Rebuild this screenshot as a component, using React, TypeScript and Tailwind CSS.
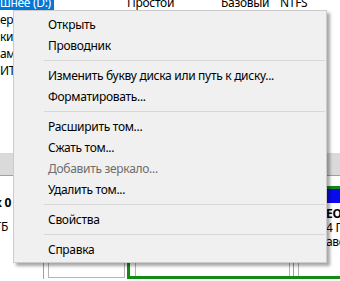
import React from 'react';

type Entry = { label?: string; disabled?: boolean; sep?: boolean };

const menu: Entry[] = [
  { label: 'Открыть' },
  { label: 'Проводник' },
  { sep: true },
  { label: 'Изменить букву диска или путь к диску...' },
  { label: 'Форматировать...' },
  { sep: true },
  { label: 'Расширить том...' },
  { label: 'Сжать том...' },
  { label: 'Добавить зеркало...', disabled: true },
  { label: 'Удалить том...' },
  { sep: true },
  { label: 'Свойства' },
  { sep: true },
  { label: 'Справка' },
];

const listRows = ['ерв', 'ки', 'ам', 'ИТЕ'];

export default function App() {
  return (
    <div className="relative w-[340px] h-[281px] overflow-hidden bg-white text-[12px] tracking-[-0.3px] text-black font-['Segoe_UI','Noto_Sans','Open_Sans',sans-serif]">
      {/* volume list */}
      <div className="h-[159px] -mt-[6px] flex flex-col leading-[17px]">
        <div className="flex h-[17px] shrink-0 whitespace-nowrap">
          <div className="w-[127px]">
            <div className="inline-block h-[15px] pr-[3px] bg-[#0078d7] text-white leading-[15px]">шнее (D:)</div>
          </div>
          <div className="w-[94px]">Простой</div>
          <div className="w-[59px]">Базовый</div>
          <div>NTFS</div>
        </div>
        {listRows.map((r) => (
          <div key={r} className="h-[17px] shrink-0 whitespace-nowrap">
            {r}
          </div>
        ))}
      </div>

      {/* splitter */}
      <div className="h-[23px] bg-[#dadada] border-b border-[#a0a0a0]" />

      {/* disk view */}
      <div className="flex pt-[10px]">
        <div className="flex h-[93px] w-full">
          <div className="w-[43px] shrink-0 flex flex-col pt-[10px] leading-[14px]">
            <div className="flex justify-end w-[11px] h-[14px] whitespace-nowrap font-bold">Диск 0</div>
            <div className="h-[10px]" />
            <div className="flex justify-end w-[8px] h-[14px] whitespace-nowrap">931,51 ГБ</div>
          </div>

          <div className="w-[84px] shrink-0 flex flex-col border-l border-[#a0a0a0] pt-[2px]">
            <div className="h-[14px] bg-[#0a0af0]" />
            <div className="flex-1 ml-[4px] mr-[2px] mb-[1px] border border-[#b4b4b4] bg-white" />
          </div>

          <div className="flex flex-1 border-[3px] border-r-0 border-[#138a13]">
            <div className="w-[163px] shrink-0 flex flex-col">
              <div className="h-[14px] bg-[#0a0af0]" />
              <div className="flex-1 ml-[5px] mr-[3px] border-x border-[#b4b4b4] bg-white" />
            </div>
            <div className="flex-1 flex flex-col border-l border-[#a0a0a0]">
              <div className="h-[14px] bg-[#0a0af0]" />
              <div className="flex-1 ml-[4px] border-l border-[#b4b4b4] pl-[27px] pt-[4px] leading-[14px] whitespace-nowrap">
                <div className="font-bold">ЕО (E:)</div>
                <div>4 ГБ NTFS</div>
                <div>авен (Логический диск)</div>
              </div>
            </div>
          </div>
        </div>
      </div>

      {/* context menu */}
      <div className="absolute left-[13px] top-[10px] w-[314px] bg-[#f0f0f0] border border-[#cccccc] pt-[3px] pb-[2px] shadow-[3px_3px_3px_rgba(0,0,0,0.35)]">
        {menu.map((m, i) =>
          m.sep ? (
            <div key={i} className="h-[9px] flex items-center pl-[30px] pr-[1px]">
              <div className="h-px flex-1 bg-[#d7d7d7]" />
            </div>
          ) : (
            <div
              key={i}
              className={`h-[21px] flex items-center pl-[34px] whitespace-nowrap ${m.disabled ? 'text-[#6d6d6d]' : 'text-black'}`}
            >
              {m.label}
            </div>
          )
        )}
      </div>
    </div>
  );
}
